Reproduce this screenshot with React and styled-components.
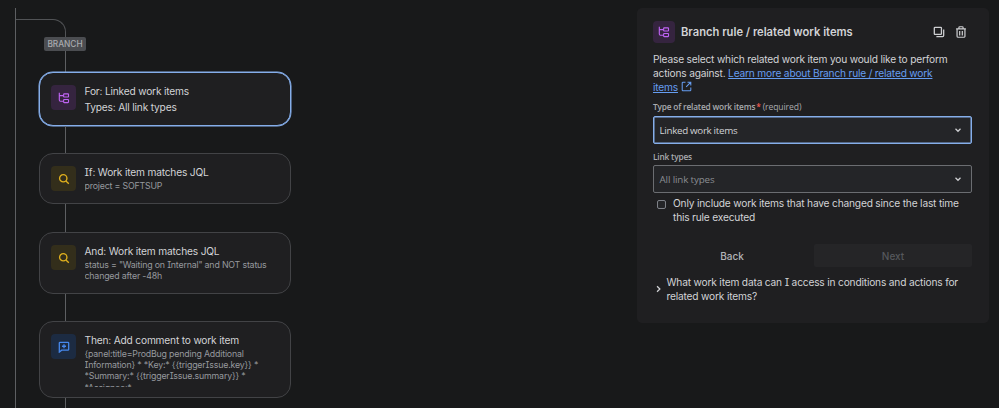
import styled, { createGlobalStyle } from "styled-components";

const GlobalStyle = createGlobalStyle`
  * {
    box-sizing: border-box;
  }
  body {
    margin: 0;
    background-color: #18191a;
    color: #d2d3d6;
    font-family: Inter, "Liberation Sans", sans-serif;
    font-feature-settings: "cv08" 1, "calt" 0;
  }
`;

const Page = styled.div`
  display: flex;
  justify-content: space-between;
  align-items: flex-start;
  height: 408px;
  padding: 8px 10px 0 15px;
  overflow: hidden;
`;

/* flow */
const Rail = styled.div`
  height: 400px;
  padding-top: 11px;
  border-left: 1px solid #5d5f62;
`;

const Elbow = styled.div`
  width: 50px;
  height: 18px;
  border-top: 1px solid #515356;
  border-right: 1px solid #515356;
  border-top-right-radius: 13px;
`;

const Connector = styled.div`
  width: 1px;
  height: ${({ $height }) => $height}px;
  margin-left: 49px;
  background-color: #5d5f62;
`;

const BranchTag = styled.div`
  width: 42px;
  height: 14px;
  margin-left: 28px;
  border-radius: 2px;
  background-color: #4b4d51;
  color: #a9abaf;
  font-size: 8.3px;
  font-weight: 500;
  line-height: 14px;
  text-align: center;
`;

const Card = styled.div`
  display: flex;
  gap: 8.5px;
  width: 252px;
  height: ${({ $height }) => $height}px;
  margin-left: 23px;
  padding: 12px 11px;
  border: 1px solid ${({ $selected }) => ($selected ? "#85aeea" : "#424346")};
  border-radius: 14px;
  background-color: #1f1f21;
  box-shadow: ${({ $selected }) =>
    $selected ? "0 0 0 0.5px #85aeea" : "none"};
`;

const tones = {
  purple: { bg: "#35243f", fg: "#bf63f3" },
  yellow: { bg: "#332e1b", fg: "#e0b01e" },
  blue: { bg: "#1c2b42", fg: "#4688ec" },
};

const IconTile = styled.div`
  display: flex;
  align-items: center;
  justify-content: center;
  flex-shrink: 0;
  width: ${({ $size }) => $size}px;
  height: ${({ $size }) => $size}px;
  border-radius: 4px;
  background-color: ${({ $tone }) => tones[$tone].bg};
  color: ${({ $tone }) => tones[$tone].fg};
`;

const CardBody = styled.div`
  flex: 1;
  margin-top: ${({ $selected }) => ($selected ? -1 : 0)}px;
  white-space: nowrap;
`;

const CardTitle = styled.div`
  font-size: 10.2px;
  letter-spacing: -0.19px;
  line-height: ${({ $tall }) => ($tall ? 15.5 : 12)}px;
`;

const CardDetail = styled.div`
  max-height: 39px;
  margin-top: 2px;
  overflow: hidden;
  color: #96999e;
  font-size: 8.8px;
  letter-spacing: -0.18px;
  line-height: 11.2px;
`;

/* side panel */
const Panel = styled.div`
  width: 352px;
  height: 315px;
  padding: 12px 17px 0 16px;
  border-radius: 5px;
  background-color: #1f1f21;
`;

const PanelHeader = styled.div`
  display: flex;
  align-items: center;
  height: 23px;
`;

const PanelTitle = styled.h2`
  flex: 1;
  margin: 0 0 0 6px;
  font-size: 11.2px;
  font-weight: 600;
  line-height: 16px;
`;

const IconButton = styled.button`
  display: flex;
  margin: 0 5px;
  padding: 0;
  border: none;
  background: none;
  color: #cecfd2;
`;

const Description = styled.p`
  margin: 9px 0 0;
  font-size: 10.2px;
  letter-spacing: -0.195px;
  line-height: 14px;
  white-space: nowrap;
`;

const DocLink = styled.a`
  color: #669df1;
  text-decoration: underline;
  svg {
    margin-left: 3px;
    vertical-align: -1px;
  }
`;

const Label = styled.div`
  margin-top: ${({ $top }) => $top}px;
  color: #a9abaf;
  font-family: "Open Sans", "Noto Sans", sans-serif;
  font-size: 8.3px;
  font-weight: 600;
  letter-spacing: -0.18px;
  line-height: 12px;
`;

const Required = styled.span`
  margin-left: -1px;
  color: #f15b50;
`;

const Hint = styled.span`
  font-size: 8.6px;
  font-weight: 400;
  letter-spacing: -0.1px;
`;

const Select = styled.div`
  display: flex;
  align-items: center;
  justify-content: space-between;
  height: 28px;
  margin-top: ${({ $top }) => $top}px;
  padding: 0 8px 0 5.5px;
  border: 1px solid ${({ $focused }) => ($focused ? "#85aeea" : "#6b6d71")};
  border-radius: 2px;
  background-color: #242528;
  box-shadow: ${({ $focused }) =>
    $focused ? "inset 0 0 0 0.5px #85aeea" : "none"};
  color: ${({ $focused }) => ($focused ? "#d2d3d6" : "#8a8d92")};
  font-family: "Open Sans", "Noto Sans", sans-serif;
  font-size: 9.8px;
  font-weight: ${({ $focused }) => ($focused ? 500 : 400)};
  letter-spacing: ${({ $focused }) => ($focused ? -0.32 : -0.14)}px;
  svg {
    color: #cecfd2;
  }
`;

const CheckRow = styled.label`
  display: flex;
  gap: 7px;
  margin-top: 3px;
  padding-left: 4px;
  font-size: 10.2px;
  letter-spacing: -0.19px;
  line-height: 14px;
  white-space: nowrap;
`;

const Checkbox = styled.span`
  flex-shrink: 0;
  width: 9px;
  height: 9px;
  margin-top: 4px;
  border: 1px solid #7e8188;
  border-radius: 2px;
  background-color: #242528;
`;

const Actions = styled.div`
  display: grid;
  grid-template-columns: 1fr 1fr;
  gap: 3px;
  margin-top: 20px;
`;

const ActionButton = styled.button`
  height: 23px;
  padding: 0;
  border: none;
  border-radius: 2px;
  background-color: ${({ disabled }) => (disabled ? "#252527" : "transparent")};
  color: ${({ disabled }) => (disabled ? "#56585c" : "#b2b4b8")};
  font-family: inherit;
  font-size: 10px;
  font-weight: 500;
`;

const Expander = styled.div`
  display: flex;
  align-items: center;
  gap: 3.5px;
  margin-top: 8px;
  font-size: 10.2px;
  letter-spacing: -0.185px;
  line-height: 14px;
  white-space: nowrap;
  svg {
    flex-shrink: 0;
  }
`;

const Icon = ({ size = 12, width = 1.5, children }) => (
  <svg
    width={size}
    height={size}
    viewBox="0 0 16 16"
    fill="none"
    stroke="currentColor"
    strokeWidth={width}
  >
    {children}
  </svg>
);

const BranchIcon = () => (
  <Icon>
    <path d="M1.75 1v9.75a1.5 1.5 0 0 0 1.5 1.5H7M1.75 4.75H7" />
    <rect x="7.5" y="2.5" width="6.5" height="4.2" rx="0.8" />
    <rect x="7.5" y="10" width="6.5" height="4.2" rx="0.8" />
  </Icon>
);

const SearchIcon = () => (
  <Icon width={1.8}>
    <circle cx="7" cy="7" r="4.9" />
    <path d="m10.6 10.6 3.8 3.8" />
  </Icon>
);

const CommentIcon = () => (
  <Icon width={1.7}>
    <path d="M1.75 14.8V2.75a1 1 0 0 1 1-1h10.5a1 1 0 0 1 1 1v8.5a1 1 0 0 1-1 1H4.9L1.75 14.8Z" />
    <path d="M8 4.3v5.4M5.3 7h5.4" />
  </Icon>
);

const CopyIcon = () => (
  <Icon width={1.7}>
    <rect x="1.75" y="1.75" width="9.5" height="9.5" rx="1" />
    <path d="M14.25 4.5v8.25a1.5 1.5 0 0 1-1.5 1.5H4.5" />
  </Icon>
);

const TrashIcon = () => (
  <Icon width={1.6}>
    <path d="M1.5 3.75h13M5.25 3.5V2a1 1 0 0 1 1-1h3.5a1 1 0 0 1 1 1v1.5M2.75 4v9.5a1.5 1.5 0 0 0 1.5 1.5h7.5a1.5 1.5 0 0 0 1.5-1.5V4M6.25 6.5v6M9.75 6.5v6" />
  </Icon>
);

const ExternalIcon = () => (
  <Icon size={11}>
    <path d="M6.5 1.75H2.75a1 1 0 0 0-1 1v10.5a1 1 0 0 0 1 1h10.5a1 1 0 0 0 1-1V9.5M9.5 1.75h4.75V6.5M14 2 7.5 8.5" />
  </Icon>
);

const ChevronDown = () => (
  <Icon size={10} width={2}>
    <path d="m4 6 4 4 4-4" />
  </Icon>
);

const ChevronRight = () => (
  <Icon size={10} width={2}>
    <path d="m6.5 3.5 4.5 4.5-4.5 4.5" />
  </Icon>
);

const steps = [
  {
    title: "If: Work item matches JQL",
    detail: ["project = SOFTSUP"],
    tone: "yellow",
    icon: <SearchIcon />,
    height: 51,
    gap: 28,
  },
  {
    title: "And: Work item matches JQL",
    detail: ['status = "Waiting on Internal" and NOT status', "changed after -48h"],
    tone: "yellow",
    icon: <SearchIcon />,
    height: 62,
    gap: 27,
  },
  {
    title: "Then: Add comment to work item",
    detail: [
      "{panel:title=ProdBug pending Additional",
      "Information} * *Key:* {{triggerIssue.key}} *",
      "*Summary:* {{triggerIssue.summary}} *",
      "*Assignee:*",
    ],
    tone: "blue",
    icon: <CommentIcon />,
    height: 77,
    gap: 12,
  },
];

const Step = ({ step }) => (
  <>
    <Card $height={step.height}>
      <IconTile $size={25} $tone={step.tone}>
        {step.icon}
      </IconTile>
      <CardBody>
        <CardTitle>{step.title}</CardTitle>
        <CardDetail>
          {step.detail.map((line) => (
            <div key={line}>{line}</div>
          ))}
        </CardDetail>
      </CardBody>
    </Card>
    <Connector $height={step.gap} />
  </>
);

const App = () => {
  return (
    <Page>
      <GlobalStyle />
      <Rail>
        <Elbow />
        <BranchTag>BRANCH</BranchTag>
        <Connector $height={21} />
        <Card $height={54} $selected>
          <IconTile $size={25} $tone="purple">
            <BranchIcon />
          </IconTile>
          <CardBody $selected>
            <CardTitle $tall>For: Linked work items</CardTitle>
            <CardTitle $tall>Types: All link types</CardTitle>
          </CardBody>
        </Card>
        <Connector $height={27} />
        {steps.map((step) => (
          <Step key={step.title} step={step} />
        ))}
      </Rail>

      <Panel>
        <PanelHeader>
          <IconTile $size={22} $tone="purple">
            <BranchIcon />
          </IconTile>
          <PanelTitle>Branch rule / related work items</PanelTitle>
          <IconButton aria-label="Duplicate">
            <CopyIcon />
          </IconButton>
          <IconButton aria-label="Delete">
            <TrashIcon />
          </IconButton>
        </PanelHeader>

        <Description>
          Please select which related work item you would like to perform
          <br />
          actions against.{" "}
          <DocLink>
            Learn more about Branch rule / related work
            <br />
            items
            <ExternalIcon />
          </DocLink>
        </Description>

        <Label $top={7}>
          Type of related work items <Required>*</Required>{" "}
          <Hint>(required)</Hint>
        </Label>
        <Select $top={3} $focused>
          Linked work items
          <ChevronDown />
        </Select>

        <Label $top={7}>Link types</Label>
        <Select $top={2}>
          All link types
          <ChevronDown />
        </Select>

        <CheckRow>
          <Checkbox />
          <span>
            Only include work items that have changed since the last time
            <br />
            this rule executed
          </span>
        </CheckRow>

        <Actions>
          <ActionButton>Back</ActionButton>
          <ActionButton disabled>Next</ActionButton>
        </Actions>

        <Expander>
          <ChevronRight />
          <span>
            What work item data can I access in conditions and actions for
            <br />
            related work items?
          </span>
        </Expander>
      </Panel>
    </Page>
  );
};

export default App;
